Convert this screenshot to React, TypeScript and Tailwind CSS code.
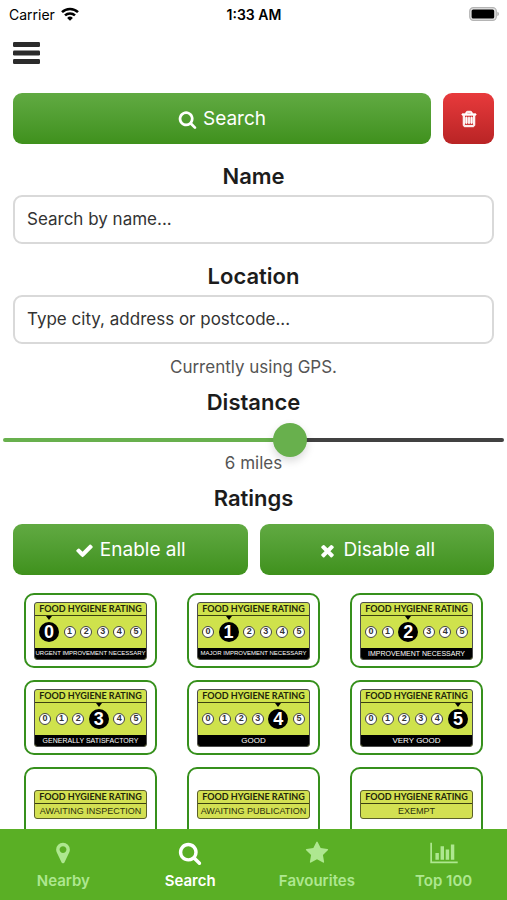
import { useState } from "react";
import clsx from "clsx";

const ICONS = {
  search: "M1216 832q0-185-131.5-316.5t-316.5-131.5-316.5 131.5-131.5 316.5 131.5 316.5 316.5 131.5 316.5-131.5 131.5-316.5zm512 832q0 52-38 90t-90 38q-54 0-90-38l-343-342q-179 124-399 124-143 0-273.5-55.5t-225-150-150-225-55.5-273.5 55.5-273.5 150-225 225-150 273.5-55.5 273.5 55.5 225 150 150 225 55.5 273.5q0 220-124 399l343 343q37 37 37 90z",
  check: "M1671 566q0 40-28 68l-724 724-136 136q-28 28-68 28t-68-28l-136-136-362-362q-28-28-28-68t28-68l136-136q28-28 68-28t68 28l294 295 656-657q28-28 68-28t68 28l136 136q28 28 28 68z",
  times: "M1490 1322q0 40-28 68l-136 136q-28 28-68 28t-68-28l-294-294-294 294q-28 28-68 28t-68-28l-136-136q-28-28-28-68t28-68l294-294-294-294q-28-28-28-68t28-68l136-136q28-28 68-28t68 28l294 294 294-294q28-28 68-28t68 28l136 136q28 28 28 68t-28 68l-294 294 294 294q28 28 28 68z",
  trash: "M704 736v576q0 14-9 23t-23 9h-64q-14 0-23-9t-9-23v-576q0-14 9-23t23-9h64q14 0 23 9t9 23zm256 0v576q0 14-9 23t-23 9h-64q-14 0-23-9t-9-23v-576q0-14 9-23t23-9h64q14 0 23 9t9 23zm256 0v576q0 14-9 23t-23 9h-64q-14 0-23-9t-9-23v-576q0-14 9-23t23-9h64q14 0 23 9t9 23zm128 724v-948h-896v948q0 22 7 40.5t14.5 27 10.5 8.5h832q3 0 10.5-8.5t14.5-27 7-40.5zm-672-1076h448l-48-117q-7-9-17-11h-317q-10 2-17 11zm928 32v64q0 14-9 23t-23 9h-96v948q0 83-47 143.5t-113 60.5h-832q-66 0-113-58.5t-47-141.5v-952h-96q-14 0-23-9t-9-23v-64q0-14 9-23t23-9h309l70-167q15-37 54-63t79-26h320q40 0 79 26t54 63l70 167h309q14 0 23 9t9 23z",
  marker: "M1152 640q0-106-75-181t-181-75-181 75-75 181 75 181 181 75 181-75 75-181zm256 0q0 109-33 179l-364 774q-16 33-47.5 52t-67.5 19-67.5-19-46.5-52l-365-774q-33-70-33-179 0-212 150-362t362-150 362 150 150 362z",
  star: "M1728 647q0 22-26 48l-363 354 86 500q1 7 1 20 0 21-10.5 35.5t-30.5 14.5q-19 0-40-12l-449-236-449 236q-22 12-40 12-21 0-31.5-14.5t-10.5-35.5q0-6 2-20l86-500-364-354q-25-27-25-48 0-37 56-46l502-73 225-455q19-41 49-41t49 41l225 455 502 73q56 9 56 46z",
  chart: "M640 896v512h-256v-512h256zm384-512v1024h-256v-1024h256zm1024 1152v128h-2048v-1536h128v1408h1920zm-640-896v768h-256v-768h256zm384-384v1152h-256v-1152h256z",
};

type IconName = keyof typeof ICONS;

function Icon({ name, className }: { name: IconName; className?: string }) {
  return (
    <svg viewBox={name === "chart" ? "0 0 2048 1792" : "0 0 1792 1792"} fill="currentColor" className={className} aria-hidden="true">
      <path d={ICONS[name]} />
    </svg>
  );
}

const GREEN_BUTTON =
  "flex h-[51px] flex-1 items-center justify-center gap-1.5 rounded-[9px] bg-linear-to-b from-[#61aa42] to-[#3f911c] pt-px text-[19px] text-white";

const SCORES = [
  { score: 0, label: "URGENT IMPROVEMENT NECESSARY" },
  { score: 1, label: "MAJOR IMPROVEMENT NECESSARY" },
  { score: 2, label: "IMPROVEMENT NECESSARY" },
  { score: 3, label: "GENERALLY SATISFACTORY" },
  { score: 4, label: "GOOD" },
  { score: 5, label: "VERY GOOD" },
];

const UNSCORED = ["AWAITING INSPECTION", "AWAITING PUBLICATION", "EXEMPT"];

const TABS: { label: string; icon: IconName; active?: boolean }[] = [
  { label: "Nearby", icon: "marker" },
  { label: "Search", icon: "search", active: true },
  { label: "Favourites", icon: "star" },
  { label: "Top 100", icon: "chart" },
];

function labelSize(label: string) {
  if (label.length > 24) return "text-[6px]";
  return label.length > 12 ? "text-[7px]" : "text-[8px]";
}

function StatusBar() {
  return (
    <div className="grid h-7 grid-cols-3 items-center pl-[9px] pr-2 text-[14px] text-black">
      <div className="flex items-center gap-1.5">
        Carrier
        <svg viewBox="0 0 18 14" className="h-3.5 w-[18px]" fill="none" stroke="currentColor" strokeWidth="2.5">
          <path d="M1 5.2a11.4 11.4 0 0 1 16 0M4 8.4a7.2 7.2 0 0 1 10 0" />
          <path d="M9 13.8 6.1 10.9a4.2 4.2 0 0 1 5.8 0z" fill="currentColor" stroke="none" />
        </svg>
      </div>
      <div className="text-center font-semibold">1:33 AM</div>
      <svg viewBox="0 0 30 14" className="h-3.5 w-[30px] justify-self-end">
        <rect x="0.7" y="0.7" width="26.6" height="12.6" rx="3.6" fill="#e4e4e4" stroke="#b4b4b4" strokeWidth="1.2" />
        <rect x="2.6" y="2.4" width="22.6" height="9.2" rx="1.6" fill="#000" />
        <path d="M28.4 4.8v4.4q1.5-.6 1.5-2.2t-1.5-2.2z" fill="#a8a8a8" />
      </svg>
    </div>
  );
}

function Heading({ children, htmlFor }: { children: string; htmlFor?: string }) {
  const className = "block text-center text-[22px] leading-7 font-semibold text-[#1c1c1c]";
  return htmlFor ? (
    <label htmlFor={htmlFor} className={className}>{children}</label>
  ) : (
    <h2 className={className}>{children}</h2>
  );
}

function TextField({ id, placeholder }: { id: string; placeholder: string }) {
  return (
    <input
      id={id}
      type="text"
      placeholder={placeholder}
      className="mt-[5px] block h-[49px] w-full rounded-[9px] border-2 border-[#d9d9d9] bg-white px-3 pb-0.5 text-[17px] text-[#333] outline-none placeholder:text-[#333]"
    />
  );
}

function BadgeTitle() {
  return (
    <div className="border-b border-[#3b4010] text-center font-['Lato'] text-[9px] leading-3 font-bold whitespace-nowrap text-[#20240a]">
      FOOD HYGIENE RATING
    </div>
  );
}

function ScoreBadge({ score, label }: { score: number; label: string }) {
  return (
    <div className="w-[113px] overflow-hidden rounded-[3px] border border-[#4c4c4c] bg-[#cfe24c]">
      <BadgeTitle />
      <div className="flex h-8 items-center justify-between px-1">
        {[0, 1, 2, 3, 4, 5].map((n) =>
          n === score ? (
            <span key={n} className="relative flex size-5 items-center justify-center rounded-full bg-black text-[18px] leading-none font-bold text-white">
              <svg viewBox="0 0 6 4" className="absolute -top-[6px] left-[7px] h-1 w-1.5">
                <path d="M0 0h6L3 4z" />
              </svg>
              {n}
            </span>
          ) : (
            <span key={n} className="flex size-3 items-center justify-center rounded-full border border-[#444] bg-white text-[9px] leading-none font-bold text-[#333]">
              {n}
            </span>
          ),
        )}
      </div>
      <div className={clsx("bg-black text-center leading-[11px] whitespace-nowrap text-white", labelSize(label))}>
        {label}
      </div>
    </div>
  );
}

function PlainBadge({ label }: { label: string }) {
  return (
    <div className="w-[113px] overflow-hidden rounded-[3px] border border-[#5b5f2a] bg-[#d3e052]">
      <BadgeTitle />
      <div className="text-center text-[9px] leading-[14px] whitespace-nowrap text-[#2c300e]">{label}</div>
    </div>
  );
}

function RatingCard({ children, label }: { children: React.ReactNode; label: string }) {
  return (
    <button
      type="button"
      aria-label={label}
      className="flex h-[75px] w-[133px] items-center justify-center rounded-[10px] border-2 border-[#36901c] bg-white font-['Liberation_Sans',sans-serif]"
    >
      {children}
    </button>
  );
}

export default function App() {
  const [miles, setMiles] = useState(6);
  const filled = ((miles - 0.5) / 9.5) * 100;

  return (
    <div className="flex h-screen flex-col bg-white font-['Inter',sans-serif]">
      <StatusBar />
      <header className="h-[65px] px-[13px] pt-3">
        <button type="button" aria-label="Menu" className="block text-[#2b2b2b]">
          <svg viewBox="0 0 27 24" className="h-6 w-[27px]" fill="currentColor">
            <rect y="2" width="27" height="5" rx="1.2" />
            <rect y="10.5" width="27" height="5" rx="1.2" />
            <rect y="19" width="27" height="5" rx="1.2" />
          </svg>
        </button>
      </header>

      <main className="min-h-0 flex-1 overflow-y-auto [scrollbar-width:none]">
        <form className="px-[13px]" onSubmit={(event) => event.preventDefault()}>
          <div className="flex gap-3">
            <button type="submit" className={GREEN_BUTTON}>
              <Icon name="search" className="size-[19px]" />
              Search
            </button>
            <button
              type="button"
              aria-label="Clear search"
              className="flex size-[51px] items-center justify-center rounded-[9px] bg-linear-to-b from-[#e83a3c] to-[#b92425] text-white"
            >
              <Icon name="trash" className="size-[18px] stroke-current stroke-[90px]" />
            </button>
          </div>

          <div className="mt-[18px]">
            <Heading htmlFor="name">Name</Heading>
            <TextField id="name" placeholder="Search by name..." />
          </div>
          <div className="mt-[18px]">
            <Heading htmlFor="location">Location</Heading>
            <TextField id="location" placeholder="Type city, address or postcode..." />
          </div>
          <p className="mt-[11px] text-center text-[17px] leading-6 text-[#555]">Currently using GPS.</p>
        </form>

        <div className="mt-[9px] px-[3px]">
          <Heading htmlFor="distance">Distance</Heading>
          <input
            id="distance"
            type="range"
            min={0.5}
            max={10}
            step={0.5}
            value={miles}
            onChange={(event) => setMiles(Number(event.target.value))}
            style={{ backgroundImage: `linear-gradient(to right, #68b04d ${filled}%, #414141 ${filled}%)` }}
            className="mt-[22px] block h-1 w-full appearance-none rounded-full outline-none [&::-webkit-slider-thumb]:size-[34px] [&::-webkit-slider-thumb]:appearance-none [&::-webkit-slider-thumb]:rounded-full [&::-webkit-slider-thumb]:bg-[#68b04d] [&::-webkit-slider-thumb]:shadow-[0_4px_8px_rgba(0,0,0,0.15)]"
          />
          <p className="mt-[9px] text-center text-[17px] leading-6 text-[#555]">{miles} miles</p>
        </div>

        <section className="mt-[9px]">
          <Heading>Ratings</Heading>
          <div className="mt-3 flex gap-3 px-[13px]">
            <button type="button" className={GREEN_BUTTON}>
              <Icon name="check" className="size-[19px]" />
              Enable all
            </button>
            <button type="button" className={GREEN_BUTTON}>
              <Icon name="times" className="size-[19px]" />
              Disable all
            </button>
          </div>
          <div className="mt-[18px] grid grid-cols-3 justify-items-center gap-y-3 px-[9px] pb-4">
            {SCORES.map(({ score, label }) => (
              <RatingCard key={score} label={label}>
                <ScoreBadge score={score} label={label} />
              </RatingCard>
            ))}
            {UNSCORED.map((label) => (
              <RatingCard key={label} label={label}>
                <PlainBadge label={label} />
              </RatingCard>
            ))}
          </div>
        </section>
      </main>

      <nav className="grid h-[71px] grid-cols-4 bg-[#5aaf25]">
        {TABS.map(({ label, icon, active }) => (
          <a
            key={label}
            href="#"
            aria-current={active ? "page" : undefined}
            className={clsx("flex flex-col items-center gap-1.5 pt-3 text-[15px] leading-5 font-semibold", active ? "text-white" : "text-[#aee790]")}
          >
            <Icon name={icon} className={icon === "chart" ? "h-6 w-7" : "size-6"} />
            {label}
          </a>
        ))}
      </nav>
    </div>
  );
}
